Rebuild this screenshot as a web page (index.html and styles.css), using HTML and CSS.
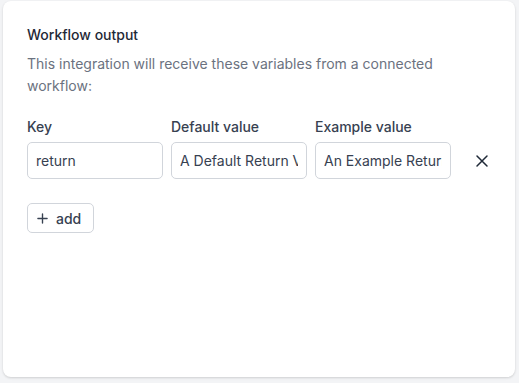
FILE: index.html
```html
<!DOCTYPE html>
<html lang="en">
<head>
    <meta charset="UTF-8" />
    <meta name="viewport" content="width=device-width, initial-scale=1.0"/>
    <title>Workflow output</title>
    <link rel="stylesheet" href="styles.css">
</head>
<body>
    <div class="card">
        <h2 class="card-title">Workflow output</h2>
        <p class="card-desc">
            This integration will receive these variables from a connected workflow:
        </p>

        <div class="var-table">
            <div class="var-head">
                <span class="var-label">Key</span>
                <span class="var-label">Default value</span>
                <span class="var-label">Example value</span>
                <span></span>
            </div>
            <div class="var-row">
                <input class="var-input" type="text" value="return">
                <input class="var-input" type="text" value="A Default Return Value">
                <input class="var-input" type="text" value="An Example Return Value">
                <button class="remove-button" title="Remove">
                    <svg width="14" height="14" viewBox="0 0 14 14" fill="none" stroke="currentColor" stroke-width="1.5" stroke-linecap="round">
                        <path d="M2 2 L12 12 M12 2 L2 12"/>
                    </svg>
                </button>
            </div>
        </div>

        <button class="add-button">
            <svg width="11" height="11" viewBox="0 0 12 12" fill="none" stroke="currentColor" stroke-width="1.5" stroke-linecap="round">
                <path d="M6 1 V11 M1 6 H11"/>
            </svg>
            add
        </button>
    </div>
</body>
</html>
```

FILE: styles.css
```css
* {
    margin: 0;
    padding: 0;
    box-sizing: border-box;
}

body {
    font-family: 'Inter', -apple-system, 'Segoe UI', Roboto, sans-serif;
    background: #f3f4f6;
    padding: 1px 4px 6px 3px;
    height: 100vh;
    color: #374151;
}

.card {
    background: #fff;
    border-radius: 8px;
    box-shadow: 0 1px 3px rgba(0, 0, 0, 0.1), 0 1px 2px rgba(0, 0, 0, 0.06);
    height: 376px;
    padding: 24px 24px 24px 24px;
}

.card-title {
    font-size: 14px;
    font-weight: 500;
    line-height: 20px;
    color: #1f2937;
}

.card-desc {
    margin-top: 8px;
    max-width: 440px;
    font-size: 14px;
    line-height: 22px;
    color: #6b7280;
}

.var-table {
    margin-top: 20px;
}

.var-head,
.var-row {
    display: grid;
    grid-template-columns: 136px 136px 136px 40px;
    column-gap: 8px;
}

.var-label {
    font-size: 14px;
    font-weight: 500;
    line-height: 20px;
    color: #374151;
}

.var-row {
    margin-top: 5px;
    align-items: center;
}

.var-input {
    height: 37px;
    width: 100%;
    padding: 0 8px;
    border: 1px solid #d1d5db;
    border-radius: 5px;
    font-family: inherit;
    font-size: 14px;
    color: #374151;
    background: #fff;
    outline: none;
}

.remove-button {
    border: none;
    background: none;
    color: #1f2937;
    height: 37px;
    display: flex;
    align-items: center;
    padding-left: 16px;
    cursor: pointer;
}

.add-button {
    margin-top: 24px;
    display: inline-flex;
    align-items: center;
    gap: 8px;
    height: 30px;
    padding: 0 12px 0 9px;
    border: 1px solid #d1d5db;
    border-radius: 5px;
    background: #fff;
    font-family: inherit;
    font-size: 14px;
    font-weight: 500;
    color: #374151;
    cursor: pointer;
}
```
